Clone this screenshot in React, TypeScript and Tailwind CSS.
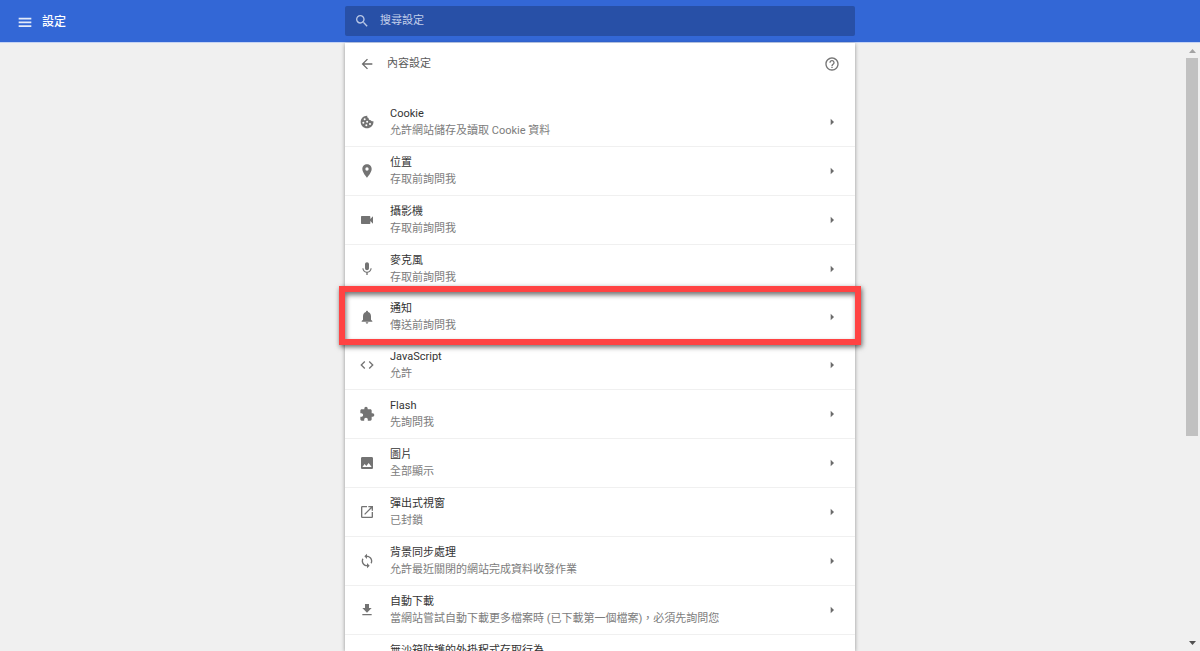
import React from 'react';
import type { IconType } from 'react-icons';
import {
  MdArrowBack,
  MdArrowRight,
  MdCode,
  MdExtension,
  MdFileDownload,
  MdHelpOutline,
  MdImage,
  MdLocationOn,
  MdMic,
  MdNotifications,
  MdOpenInNew,
  MdSearch,
  MdSync,
  MdVideocam,
} from 'react-icons/md';

interface SettingItem {
  title: string;
  description?: string;
  icon: IconType | React.FC<{ className?: string }>;
  highlighted?: boolean;
}

const MenuIcon: React.FC<{ className?: string }> = ({ className }) => (
  <svg viewBox="0 0 24 24" fill="currentColor" className={className}>
    <path d="M2.5 19.500h19v-2.600h-19zM2.500 13.800h19v-2.600h-19zM2.500 5.500v2.600h19V5.500z" />
  </svg>
);

const CookieIcon: React.FC<{ className?: string }> = ({ className }) => (
  <svg viewBox="0 0 24 24" fill="currentColor" className={className}>
    <path
      fillRule="evenodd"
      d="M12.5 2.6C6.900 2.300 2.500 6.700 2.500 12s4.200 9.500 9.500 9.500 9.700-4.200 9.700-9.500c0-.5 0-.9-.1-1.300-1.400.8-3.200.2-3.700-1.300-2.100.5-4-1.200-3.500-3.300C12.700 5.700 11.900 4.100 12.500 2.600zM8.500 6.500a1.500 1.500 0 1 1 0 3 1.500 1.500 0 0 1 0-3zM6.500 11.500a1.500 1.500 0 1 1 0 3 1.500 1.500 0 0 1 0-3zM12.200 10a1.500 1.500 0 1 1 0 3 1.500 1.500 0 0 1 0-3zM11 15.500a1.500 1.500 0 1 1 0 3 1.500 1.500 0 0 1 0-3zM16.500 13.500a1.500 1.500 0 1 1 0 3 1.500 1.500 0 0 1 0-3z"
    />
  </svg>
);

const items: SettingItem[] = [
  { title: 'Cookie', description: '允許網站儲存及讀取 Cookie 資料', icon: CookieIcon },
  { title: '位置', description: '存取前詢問我', icon: MdLocationOn },
  { title: '攝影機', description: '存取前詢問我', icon: MdVideocam },
  { title: '麥克風', description: '存取前詢問我', icon: MdMic },
  { title: '通知', description: '傳送前詢問我', icon: MdNotifications, highlighted: true },
  { title: 'JavaScript', description: '允許', icon: MdCode },
  { title: 'Flash', description: '先詢問我', icon: MdExtension },
  { title: '圖片', description: '全部顯示', icon: MdImage },
  { title: '彈出式視窗', description: '已封鎖', icon: MdOpenInNew },
  { title: '背景同步處理', description: '允許最近關閉的網站完成資料收發作業', icon: MdSync },
  {
    title: '自動下載',
    description: '當網站嘗試自動下載更多檔案時 (已下載第一個檔案)，必須先詢問您',
    icon: MdFileDownload,
  },
  { title: '無沙箱防護的外掛程式存取行為', icon: MdExtension },
];

const SettingRow: React.FC<{ item: SettingItem; divided: boolean }> = ({ item, divided }) => {
  const Icon = item.icon;
  return (
    <li className={divided ? 'relative border-b border-[#f0f0f0]' : 'relative'}>
      <button type="button" className="flex h-12 w-full items-center gap-[15px] pl-[14px] pr-[15px] text-left">
        <Icon className="size-4 shrink-0 text-[#737373]" />
        <span className="min-w-0 flex-1 self-start pt-[7px] leading-[17px]">
          <span className="block truncate text-[#333333]">{item.title}</span>
          {item.description && <span className="block truncate text-[#7c7c7c]">{item.description}</span>}
        </span>
        <MdArrowRight className="size-4 shrink-0 text-[#6b6b6b]" />
      </button>
      {item.highlighted && (
        <div className="pointer-events-none absolute -inset-x-1.5 -top-[7px] -bottom-1 z-10 border-6 border-[#ff4343] shadow-[1px_2px_5px_rgba(0,0,0,0.6),inset_1px_3px_5px_rgba(0,0,0,0.55)]" />
      )}
    </li>
  );
};

const Scrollbar: React.FC = () => (
  <div className="absolute inset-y-0 right-0 flex w-4 flex-col px-0.5">
    <svg viewBox="0 0 12 15" className="h-[15px] w-3 shrink-0">
      <path d="M3 10h7L6.500 6z" fill="#a3a3a3" />
    </svg>
    <div className="flex-[17] bg-[#c1c1c1]" />
    <div className="flex-[9]" />
    <svg viewBox="0 0 12 15" className="h-[15px] w-3 shrink-0">
      <path d="M3 5h7L6.500 9z" fill="#505050" />
    </svg>
  </div>
);

const App: React.FC = () => {
  return (
    <div className="flex h-screen flex-col overflow-hidden bg-[#f0f0f0] font-[Roboto,'Noto_Sans_CJK_TC',sans-serif] text-[11px]">
      <header className="grid h-[43px] shrink-0 grid-cols-[1fr_minmax(0,510px)_1fr] border-b border-[#c5d3f3] bg-[#3367d6]">
        <button type="button" className="flex items-center gap-[9px] pt-0.5 pl-[17px] text-xs font-medium text-white">
          <MenuIcon className="size-4 text-[#e4ebfa]" />
          設定
        </button>
        <label className="my-1.5 flex items-center gap-2.5 rounded-xs bg-[#2850a7] pl-[9px] text-[#b9c7e6]">
          <MdSearch className="size-4 shrink-0" />
          <input
            type="search"
            aria-label="搜尋設定"
            placeholder="搜尋設定"
            className="w-full bg-transparent outline-none placeholder:text-[#c3cfea]"
          />
        </label>
      </header>

      <div className="relative flex min-h-0 flex-1 justify-center">
        <main className="w-full max-w-[510px] bg-white shadow-[0_1px_4px_rgba(0,0,0,0.4)]">
          <div className="mb-[13px] flex h-[42px] items-center gap-3 pl-[14px] pr-[15px]">
            <button type="button" aria-label="內容設定">
              <MdArrowBack className="size-4 text-[#6b6b6b]" />
            </button>
            <h1 className="flex-1 text-[#5a5a5a]">內容設定</h1>
            <button type="button" aria-label="?">
              <MdHelpOutline className="size-4 text-[#757575]" />
            </button>
          </div>
          <ul>
            {items.map((item, index) => (
              // the frame replaces the dividers above and below a highlighted row
              <SettingRow
                key={item.title}
                item={item}
                divided={!item.highlighted && !items[index + 1]?.highlighted}
              />
            ))}
          </ul>
        </main>
        <Scrollbar />
      </div>
    </div>
  );
};

export default App;
